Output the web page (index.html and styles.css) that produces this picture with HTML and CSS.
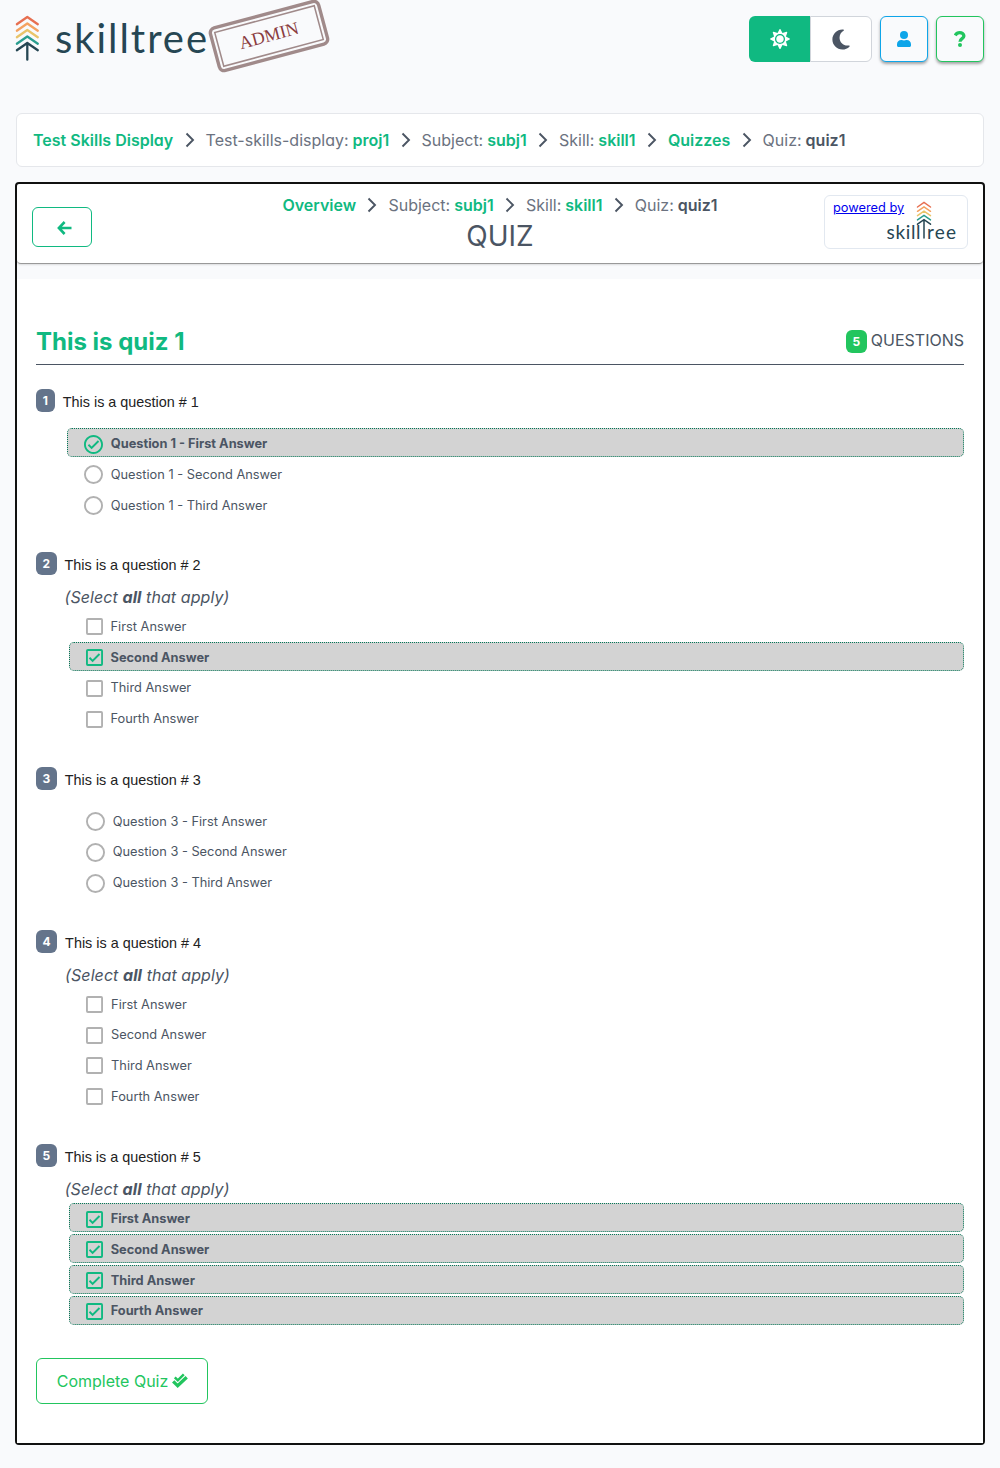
FILE: index.html
```html
<!DOCTYPE html>
<html lang="en">
<head>
<meta charset="utf-8">
<title>SkillTree - Quiz</title>
<link rel="stylesheet" href="styles.css">
</head>
<body>
<svg width="0" height="0" class="defs">
  <symbol id="tree" viewBox="0 0 24 46">
    <g fill="none" stroke-width="2.3" stroke-linecap="round" stroke-linejoin="round">
      <path stroke="#e76f51" d="M1.5 9.200 12 2l10.500 7.200"/>
      <path stroke="#f4a261" d="M1.500 15.700 12 8.500l10.500 7.200"/>
      <path stroke="#e9c46a" d="M1.500 22.200 12 15l10.500 7.200"/>
      <path stroke="#2a9d8f" d="M1.500 28.700 12 21.500l10.500 7.200"/>
      <path stroke="#264653" d="M1.500 35.200 12 28l10.500 7.200M12 28V44.700"/>
    </g>
  </symbol>
  <symbol id="chev" viewBox="0 0 10 16"><path fill="none" stroke="#4b5563" stroke-width="1.900" d="M1.500 1.500 8 8 1.500 14.500"/></symbol>
  <symbol id="radio" viewBox="2 2 20 20"><circle cx="12" cy="12" r="9" fill="none" stroke="#b1b1b1" stroke-width="2"/></symbol>
  <symbol id="radio-on" viewBox="2 2 20 20"><path fill="#10b981" d="M12 2C6.500 2 2 6.500 2 12S6.500 22 12 22 22 17.500 22 12 17.500 2 12 2M12 20C7.590 20 4 16.410 4 12S7.590 4 12 4 20 7.590 20 12 16.410 20 12 20M16.590 7.580L10 14.170L7.410 11.590L6 13L10 17L18 9L16.590 7.580Z"/></symbol>
  <symbol id="box" viewBox="3 3 18 18"><rect x="4" y="4" width="16" height="16" rx="1" fill="none" stroke="#b1b1b1" stroke-width="2"/></symbol>
  <symbol id="box-on" viewBox="3 3 18 18"><path fill="#10b981" d="M19,3H5A2,2 0 0,0 3,5V19A2,2 0 0,0 5,21H19A2,2 0 0,0 21,19V5A2,2 0 0,0 19,3M19,5V19H5V5H19M10,17L6,13L7.410,11.580L10,14.170L16.590,7.580L18,9"/></symbol>
</svg>

<header class="top">
  <svg class="logo" width="330" height="76" viewBox="0 0 330 76">
    <use href="#tree" x="15.300" y="15" width="24" height="46"/>
    <text class="word" x="55" y="53" textLength="152" lengthAdjust="spacing">skilltree</text>
    <g transform="translate(269 36) rotate(-15)">
      <rect x="-56" y="-22" width="112" height="44" rx="5" fill="none" stroke="#a08a8a" stroke-width="3.400"/>
      <rect x="-51.500" y="-17.500" width="103" height="35" fill="none" stroke="#a08a8a" stroke-width="1.500"/>
      <text class="stamp" x="0" y="5.500" text-anchor="middle">ADMIN</text>
    </g>
  </svg>
  <div class="actions">
    <div class="theme">
      <span class="theme-on"><svg width="20" height="20" viewBox="0 0 512 512"><path fill="#fff" d="M256 160c-52.900 0-96 43.100-96 96s43.100 96 96 96 96-43.100 96-96-43.100-96-96-96zm246.400 80.500l-94.700-47.300 33.500-100.400c4.500-13.600-8.400-26.500-21.900-21.900l-100.400 33.500-47.400-94.800c-6.400-12.800-24.600-12.800-31 0l-47.300 94.700L92.700 70.800c-13.600-4.500-26.500 8.400-21.900 21.900l33.500 100.400-94.700 47.400c-12.800 6.400-12.800 24.600 0 31l94.700 47.300-33.500 100.500c-4.500 13.600 8.400 26.500 21.900 21.900l100.400-33.500 47.300 94.700c6.400 12.800 24.600 12.800 31 0l47.300-94.700 100.400 33.500c13.600 4.500 26.500-8.400 21.900-21.900l-33.500-100.400 94.700-47.300c13-6.500 13-24.700.2-31.100zm-155.900 106c-49.900 49.900-131.100 49.900-181 0-49.900-49.900-49.900-131.100 0-181 49.900-49.900 131.100-49.900 181 0 49.900 49.900 49.900 131.100 0 181z"/></svg></span>
      <span class="theme-off"><svg width="18" height="23" viewBox="0 0 384 512"><path fill="#4b5563" d="M223.500 32C100 32 0 132.300 0 256S100 480 223.500 480c60.600 0 115.500-24.200 155.800-63.400c5-4.900 6.300-12.500 3.100-18.700s-10.100-9.700-17-8.500c-9.800 1.700-19.800 2.600-30.100 2.600c-96.900 0-175.500-78.800-175.500-176c0-65.800 36-123.100 89.300-153.300c6.100-3.500 9.200-10.500 7.700-17.300s-7.300-11.900-14.300-12.500c-6.300-.5-12.600-.8-19-.8z"/></svg></span>
    </div>
    <span class="btn info"><svg width="14" height="16" viewBox="0 0 14 16"><circle cx="7" cy="4" r="4" fill="#0ea5e9"/><path fill="#0ea5e9" d="M0 13.200C0 10.800 1.800 9 4.200 9h.5c1.500.6 3.100.6 4.600 0h.5C12.200 9 14 10.800 14 13.200v1.300c0 .8-.7 1.500-1.500 1.500h-11C.7 16 0 15.300 0 14.500z"/></svg></span>
    <span class="btn help"><svg width="12" height="16" viewBox="0 0 12 16"><path fill="none" stroke="#22c55e" stroke-width="3.300" d="M1.200 4.500C2.200 2.600 3.600 1.700 5.700 1.700 8 1.700 9.900 3 9.900 5 9.900 7.600 6 7.700 6 10.700"/><circle cx="6" cy="14" r="2" fill="#22c55e"/></svg></span>
  </div>
</header>

<nav class="crumbs page-crumbs">
  <a>Test Skills Display</a><svg><use href="#chev"/></svg>
  <span>Test-skills-display: <a>proj1</a></span><svg><use href="#chev"/></svg>
  <span>Subject: <a>subj1</a></span><svg><use href="#chev"/></svg>
  <span>Skill: <a>skill1</a></span><svg><use href="#chev"/></svg>
  <a>Quizzes</a><svg><use href="#chev"/></svg>
  <span>Quiz: <b>quiz1</b></span>
</nav>

<main class="frame">
  <div class="title-bar">
    <span class="back"><svg width="15" height="14" viewBox="0 0 15 14"><path fill="none" stroke="#10b981" stroke-width="2.600" d="M7.600 1 1.900 7l5.700 6M2 7h12.500"/></svg></span>
    <div class="heading">
      <nav class="crumbs">
        <a>Overview</a><svg><use href="#chev"/></svg>
        <span>Subject: <a>subj1</a></span><svg><use href="#chev"/></svg>
        <span>Skill: <a>skill1</a></span><svg><use href="#chev"/></svg>
        <span>Quiz: <b>quiz1</b></span>
      </nav>
      <h1>QUIZ</h1>
    </div>
    <a class="powered" href="#">
      <span>powered by</span>
      <svg width="72" height="44" viewBox="0 0 72 44">
        <g fill="none" stroke-width="1.500" stroke-linecap="round">
          <path stroke="#e76f51" d="M31.500 7 38 2.500 44.500 7"/>
          <path stroke="#f4a261" d="M31.500 11.300 38 6.800l6.500 4.500"/>
          <path stroke="#e9c46a" d="M31.500 15.600 38 11.100l6.500 4.500"/>
          <path stroke="#2a9d8f" d="M31.500 19.900 38 15.400l6.500 4.500"/>
          <path stroke="#264653" d="M31.500 24.200 38 19.700l6.500 4.500M38 19.700V38"/>
        </g>
        <text class="mini" x=".5" y="38.500" textLength="34" lengthAdjust="spacing">skill</text>
        <text class="mini" x="41" y="38.500" textLength="29" lengthAdjust="spacing">ree</text>
      </svg>
    </a>
  </div>

  <section class="quiz">
    <div class="quiz-head">
      <h2>This is quiz 1</h2>
      <div class="count"><span class="badge green">5</span> QUESTIONS</div>
    </div>

    <div class="question single">
      <span class="badge">1</span>
      <div class="body">
        <p class="text">This is a question # 1</p>
        <ul>
          <li class="on"><svg><use href="#radio-on"/></svg>Question 1 - First Answer</li>
          <li><svg><use href="#radio"/></svg>Question 1 - Second Answer</li>
          <li><svg><use href="#radio"/></svg>Question 1 - Third Answer</li>
        </ul>
      </div>
    </div>

    <div class="question multi">
      <span class="badge">2</span>
      <div class="body">
        <p class="text">This is a question # 2</p>
        <p class="hint">(Select <b>all</b> that apply)</p>
        <ul>
          <li><svg><use href="#box"/></svg>First Answer</li>
          <li class="on"><svg><use href="#box-on"/></svg>Second Answer</li>
          <li><svg><use href="#box"/></svg>Third Answer</li>
          <li><svg><use href="#box"/></svg>Fourth Answer</li>
        </ul>
      </div>
    </div>

    <div class="question single">
      <span class="badge">3</span>
      <div class="body">
        <p class="text">This is a question # 3</p>
        <ul>
          <li><svg><use href="#radio"/></svg>Question 3 - First Answer</li>
          <li><svg><use href="#radio"/></svg>Question 3 - Second Answer</li>
          <li><svg><use href="#radio"/></svg>Question 3 - Third Answer</li>
        </ul>
      </div>
    </div>

    <div class="question multi">
      <span class="badge">4</span>
      <div class="body">
        <p class="text">This is a question # 4</p>
        <p class="hint">(Select <b>all</b> that apply)</p>
        <ul>
          <li><svg><use href="#box"/></svg>First Answer</li>
          <li><svg><use href="#box"/></svg>Second Answer</li>
          <li><svg><use href="#box"/></svg>Third Answer</li>
          <li><svg><use href="#box"/></svg>Fourth Answer</li>
        </ul>
      </div>
    </div>

    <div class="question multi">
      <span class="badge">5</span>
      <div class="body">
        <p class="text">This is a question # 5</p>
        <p class="hint">(Select <b>all</b> that apply)</p>
        <ul>
          <li class="on"><svg><use href="#box-on"/></svg>First Answer</li>
          <li class="on"><svg><use href="#box-on"/></svg>Second Answer</li>
          <li class="on"><svg><use href="#box-on"/></svg>Third Answer</li>
          <li class="on"><svg><use href="#box-on"/></svg>Fourth Answer</li>
        </ul>
      </div>
    </div>

    <span class="complete">Complete Quiz <svg width="16" height="16" viewBox="0 0 16 16"><g fill="none" stroke="#22c55e"><path stroke-width="2.500" d="M2.800 4.300 5.800 7.300 11.800 1.300"/><path stroke-width="3.300" d="M1.200 8.300 5.700 12.800 14.700 4.300"/></g></svg></span>
  </section>
</main>
</body>
</html>
```
FILE: styles.css
```css
* { box-sizing: border-box; }
body {
  margin: 0;
  padding: 0 15px;
  min-height: 1468px;
  background: #f9fafc;
  color: #4b5563;
  font: 16px/24px Inter, "Liberation Sans", sans-serif;
  font-feature-settings: "cv11";
}
.defs { position: absolute; }
h1, h2, p, ul { margin: 0; padding: 0; }
svg { flex: none; display: block; }

.top { display: flex; justify-content: space-between; height: 113px; padding-right: 1px; }
.logo { margin-left: -15px; }
.word { font: 40px Lato, sans-serif; fill: #264653; }
.stamp { font: 18px "Liberation Serif", serif; fill: #8a3c40; }
.actions { display: flex; gap: 8px; padding-top: 16px; height: 63px; }
.theme { display: flex; width: 123px; height: 46px; }
.theme span, .btn { display: flex; align-items: center; justify-content: center; }
.theme-on { width: 61px; background: #10b981; border-radius: 6px 0 0 6px; }
.theme-off { width: 62px; background: #fff; border: 1px solid #d1d5db; border-radius: 0 6px 6px 0; }
.btn { width: 48px; height: 46px; border: 1px solid; border-radius: 6px; box-shadow: 0 2px 3px rgba(0, 0, 0, .35); }
.info { color: #0ea5e9; background: #f9fafc; }
.help { color: #22c55e; background: #f9fafc; }

.crumbs { display: flex; align-items: center; color: #6b7280; white-space: nowrap; }
.crumbs a { color: #10b981; font-weight: 600; }
.crumbs b { color: #4b5563; font-weight: 600; }
.crumbs span a, .crumbs b { margin-left: -.5px; }
.crumbs svg { width: 10px; height: 16px; margin: 0 11px 0 11.300px; }
.page-crumbs { height: 54px; margin: 0 1px 15px; padding: 0 16px; background: #fff; border: 1px solid #e5e7eb; border-radius: 6px; }

.frame { height: 1263px; border: 2px solid #111; border-radius: 4px; background: #f9fafc; }
.title-bar { display: grid; grid-template-columns: 144px 1fr 144px; height: 80px; padding: 0 15px; background: #fff; border-bottom: 1px solid #999; border-radius: 4px; box-shadow: 0 1px 2px rgba(0, 0, 0, .12); }
.back { display: flex; align-items: center; justify-content: center; width: 60px; height: 40px; margin-top: 23px; padding: 1px 0 0 4px; border: 1px solid #10b981; border-radius: 6px; }
.heading { padding-top: 9px; }
.heading .crumbs { justify-content: center; }
h1 { font-size: 28px; line-height: 38px; font-weight: 400; text-align: center; }
.powered { display: flex; position: relative; height: 54px; margin-top: 11px; padding: 4px 8px; border: 1px solid #e2e8f0; border-radius: 6px; background: #fff; color: #00e; font-size: 12.800px; line-height: 16px; }
.powered svg { position: absolute; left: 61px; top: 4px; }
.mini { font: 19px Lato, sans-serif; fill: #264653; }

.quiz { height: 1164px; margin-top: 15px; padding: 43px 19px 0; background: #fff; }
.quiz-head { display: flex; justify-content: space-between; height: 43px; border-bottom: 1px solid #4b5563; }
h2 { color: #10b981; font-size: 24px; line-height: 40px; font-weight: 700; }
.count { display: flex; gap: 4px; padding-top: 6px; }
.badge { flex: none; height: 23px; padding: 0 6.400px; border-radius: 6px; background: #64748b; color: #fff; font-size: 12px; line-height: 23px; font-weight: 700; letter-spacing: .2px; }
.green { background: #22c55e; margin-top: 2px; }
.quiz-head + .question { margin-top: 24px; }
.quiz-head + .question .badge { padding: 0 6.700px; }
.question { display: flex; }
.single { height: 163px; }
.multi { height: 214.600px; }
.body { flex: 1; margin-left: 8px; }
.text { height: 39.300px; padding-top: 1px; color: #222; font: 14.400px/24px "Liberation Sans", Arial, sans-serif; }
.multi .text { height: 33px; }
.hint { height: 26.200px; font-style: italic; letter-spacing: .08px; }
ul { list-style: none; margin-left: 4px; }
li { display: flex; align-items: center; gap: 8px; height: 29.100px; margin-bottom: 1.650px; padding: 2.400px 16px 0; border: 1px solid transparent; border-radius: 5px; font-size: 12.800px; }
li svg { width: 19px; height: 19px; }
.multi li svg { width: 17px; height: 17px; }
.on { background: #d3d3d3; border: 1px dotted #047857; font-weight: 700; }
.complete { display: flex; align-items: center; justify-content: center; gap: 4px; width: 172px; height: 46px; margin-top: -1px; padding-left: 1px; border: 1px solid #22c55e; border-radius: 6px; color: #22c55e; }
```
